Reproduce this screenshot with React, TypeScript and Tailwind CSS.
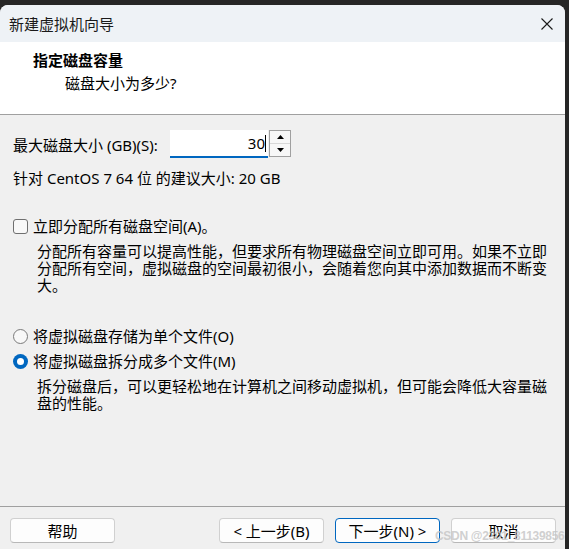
import React from 'react';

const font = "font-['Segoe_UI','Noto_Sans','Noto_Sans_CJK_SC',sans-serif]";

function Button({ children, primary }: { children: React.ReactNode; primary?: boolean }) {
  return (
    <div
      className={`w-[105px] h-[25px] rounded-[4px] bg-[#fdfdfd] border flex items-center justify-center text-[15px] leading-[20px] text-black ${
        primary ? 'border-[#0067c0]' : 'border-[#d0d0d0] border-b-[#b8b8b8]'
      }`}
    >
      {children}
    </div>
  );
}

export default function App() {
  return (
    <div className={`relative w-[569px] h-[549px] bg-[#262626] overflow-hidden ${font}`}>
      {/* window */}
      <div className="mt-[5px] w-[565px] h-[544px] rounded-t-[8px] overflow-hidden bg-[#f0f0f0] flex flex-col">
        {/* Title bar */}
        <div className="h-[37px] bg-[#eef2f6] flex items-center justify-between pl-[9px] pr-[12px]">
          <span className="text-[15px] leading-[20px] text-[#1a1a1a]">新建虚拟机向导</span>
          <svg width="12" height="12" viewBox="0 0 12 12" className="text-[#1a1a1a]">
            <path d="M0.5 0.5 L11.5 11.5 M11.5 0.5 L0.5 11.5" stroke="currentColor" strokeWidth="1.1" fill="none" />
          </svg>
        </div>

        {/* Header */}
        <div className="h-[73px] bg-white border-b border-[#a0a0a0] pt-[8px]">
          <div className="pl-[33px] text-[15px] leading-[20px] font-bold text-black">指定磁盘容量</div>
          <div className="pl-[65px] mt-[3px] text-[15px] leading-[20px] text-black">磁盘大小为多少?</div>
        </div>

        {/* Body */}
        <div className="flex-1 pt-[15px] text-[15px] text-black">
          <div className="flex items-start pl-[13px]">
            <div className="w-[157px] h-[28px] flex items-center leading-[20px] pt-[2px]">最大磁盘大小 (GB)(S):</div>
            <div className="w-[98px] h-[28px] bg-white border-b-2 border-[#0067c0] flex justify-end items-start pt-[3px] pr-[2px]">
              <span className="leading-[20px]">30</span>
              <span className="w-px h-[17px] bg-black mt-[2px]" />
            </div>
            <div className="ml-px w-[22px] h-[27px] border border-[#a0a0a0] bg-[#f7f7f7] flex flex-col">
              <div className="flex-1 flex items-center justify-center border-b border-[#d8d8d8]">
                <svg width="7" height="4" viewBox="0 0 7 4">
                  <path d="M3.5 0 L7 4 L0 4 Z" fill="#000" />
                </svg>
              </div>
              <div className="flex-1 flex items-center justify-center">
                <svg width="7" height="4" viewBox="0 0 7 4">
                  <path d="M0 0 L7 0 L3.5 4 Z" fill="#000" />
                </svg>
              </div>
            </div>
          </div>

          <div className="mt-[10px] pl-[13px] leading-[20px]">针对 CentOS 7 64 位 的建议大小: 20 GB</div>

          <div className="mt-[28px] pl-[13px] flex items-center leading-[20px]">
            <span className="w-[15px] h-[15px] rounded-[3px] border border-[#6f6f6f] bg-[#f8f8f8]" />
            <span className="ml-[5px]">立即分配所有磁盘空间(A)。</span>
          </div>
          <div className="mt-[7px] pl-[37px] leading-[17px]">
            <div>分配所有容量可以提高性能，但要求所有物理磁盘空间立即可用。如果不立即</div>
            <div>分配所有空间，虚拟磁盘的空间最初很小，会随着您向其中添加数据而不断变</div>
            <div>大。</div>
          </div>

          <div className="mt-[32px] pl-[13px] flex items-center leading-[20px]">
            <span className="w-[15px] h-[15px] rounded-full border border-[#7a7a7a] bg-[#f8f8f8]" />
            <span className="ml-[5px]">将虚拟磁盘存储为单个文件(O)</span>
          </div>
          <div className="mt-[5px] pl-[13px] flex items-center leading-[20px]">
            <span className="w-[15px] h-[15px] rounded-full bg-[#0067c0] flex items-center justify-center">
              <span className="w-[7px] h-[7px] rounded-full bg-white" />
            </span>
            <span className="ml-[5px]">将虚拟磁盘拆分成多个文件(M)</span>
          </div>
          <div className="mt-[7px] pl-[37px] leading-[17px]">
            <div>拆分磁盘后，可以更轻松地在计算机之间移动虚拟机，但可能会降低大容量磁</div>
            <div>盘的性能。</div>
          </div>
        </div>

        {/* Footer */}
        <div className="h-[43px] border-t border-[#a0a0a0] pt-[11px] pl-[10px] pr-[9px] flex items-start">
          <Button>帮助</Button>
          <div className="ml-auto flex gap-[11px]">
            <Button>&lt; 上一步(B)</Button>
            <Button primary>下一步(N) &gt;</Button>
            <Button>取消</Button>
          </div>
        </div>
      </div>

      {/* watermark */}
      <span className="absolute left-[435px] top-[529px] whitespace-nowrap text-[12px] leading-[14px] font-bold tracking-[-0.3px] text-[#c4c4c4]/80 font-['Liberation_Sans',sans-serif]">
        CSDN @2301_81139856
      </span>
    </div>
  );
}
